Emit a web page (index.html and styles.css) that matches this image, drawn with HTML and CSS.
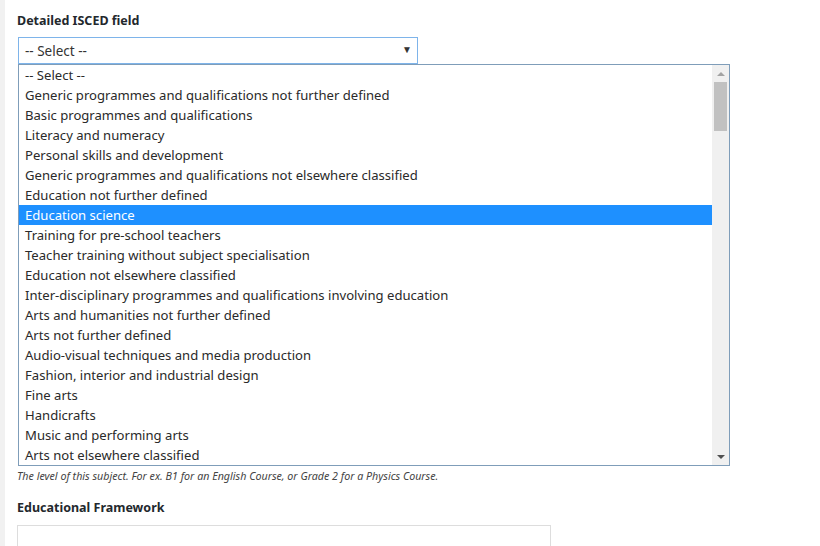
FILE: index.html
```html
<!DOCTYPE html>
<html>
<head>
<meta charset="utf-8">
<link rel="stylesheet" href="styles.css">
</head>
<body>
<div class="page">
  <div class="field">
    <div class="label">Detailed ISCED field</div>
    <div class="select">
      <span class="select-value">-- Select --</span>
      <span class="select-arrow">▼</span>
    </div>
    <div class="listbox">
      <ul class="options">
        <li>-- Select --</li>
        <li>Generic programmes and qualifications not further defined</li>
        <li>Basic programmes and qualifications</li>
        <li>Literacy and numeracy</li>
        <li>Personal skills and development</li>
        <li>Generic programmes and qualifications not elsewhere classified</li>
        <li>Education not further defined</li>
        <li class="selected">Education science</li>
        <li>Training for pre-school teachers</li>
        <li>Teacher training without subject specialisation</li>
        <li>Education not elsewhere classified</li>
        <li>Inter-disciplinary programmes and qualifications involving education</li>
        <li>Arts and humanities not further defined</li>
        <li>Arts not further defined</li>
        <li>Audio-visual techniques and media production</li>
        <li>Fashion, interior and industrial design</li>
        <li>Fine arts</li>
        <li>Handicrafts</li>
        <li>Music and performing arts</li>
        <li>Arts not elsewhere classified</li>
      </ul>
      <div class="scrollbar">
        <div class="sb-arrow sb-up"></div>
        <div class="sb-track"><div class="sb-thumb"></div></div>
        <div class="sb-arrow sb-down"></div>
      </div>
    </div>
    <div class="help">The level of this subject. For ex. B1 for an English Course, or Grade 2 for a Physics Course.</div>
  </div>
  <div class="field">
    <div class="label label-2">Educational Framework</div>
    <div class="textbox"></div>
  </div>
</div>
</body>
</html>
```
FILE: styles.css
```css
html, body {
  margin: 0;
  padding: 0;
  background: #ffffff;
  overflow: hidden;
}
body {
  font-family: "Noto Sans", "Open Sans", sans-serif;
  color: #222;
  width: 820px;
  height: 546px;
}
.page {
  border-left: 5px solid #f1f1f1;
  height: 546px;
  box-sizing: border-box;
  padding: 12px 0 0 12px;
}
.label {
  font-size: 12.5px;
  font-weight: 700;
  color: #23282d;
  line-height: 18px;
  height: 18px;
  margin-bottom: 7px;
}
.label-2 {
  margin-top: 16px;
  margin-bottom: 8px;
}
.select {
  margin-left: 1px;
  width: 400px;
  height: 27px;
  box-sizing: border-box;
  border: 1px solid #7eb4ea;
  display: flex;
  align-items: center;
  justify-content: space-between;
  padding: 0 5px 0 6px;
  font-size: 13.5px;
  color: #333;
}
.select-arrow {
  font-size: 10px;
  color: #333;
  margin-top: -3px;
}
.listbox {
  margin-left: 1px;
  width: 712px;
  height: 402px;
  box-sizing: border-box;
  border: 1px solid #7f9db9;
  display: flex;
  background: #fff;
}
.options {
  list-style: none;
  margin: 0;
  padding: 0;
  flex: 1;
  font-size: 13.1px;
  color: #2a2a2a;
}
.options li {
  height: 20px;
  line-height: 20px;
  padding-left: 6px;
  white-space: nowrap;
}
.options li.selected {
  background: #1e90ff;
  color: #fff;
}
.scrollbar {
  width: 17px;
  background: #f0f0f0;
  display: flex;
  flex-direction: column;
}
.sb-arrow {
  height: 17px;
  display: flex;
  align-items: center;
  justify-content: center;
}
.sb-up::before {
  content: "";
  border-left: 4px solid transparent;
  border-right: 4px solid transparent;
  border-bottom: 4px solid #a3a3a3;
}
.sb-down::before {
  content: "";
  border-left: 4px solid transparent;
  border-right: 4px solid transparent;
  border-top: 4px solid #505050;
}
.sb-track {
  flex: 1;
  padding: 0 2px;
}
.sb-thumb {
  height: 49px;
  background: #c1c1c1;
}
.help {
  font-size: 10.7px;
  font-style: italic;
  color: #444;
  margin-top: 3px;
  line-height: 14px;
}
.textbox {
  width: 534px;
  height: 40px;
  box-sizing: border-box;
  border: 1px solid #dddddd;
}
```
